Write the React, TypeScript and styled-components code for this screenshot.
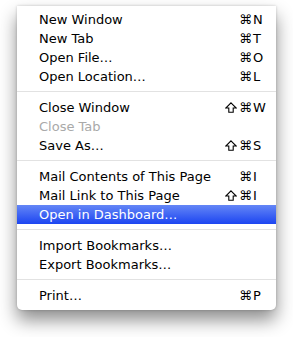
import styled, { createGlobalStyle } from "styled-components";

type Item = {
  label: string;
  shift?: boolean;
  keyName?: string;
  disabled?: boolean;
  active?: boolean;
};

const groups: Item[][] = [
  [
    { label: "New Window", keyName: "N" },
    { label: "New Tab", keyName: "T" },
    { label: "Open File…", keyName: "O" },
    { label: "Open Location…", keyName: "L" },
  ],
  [
    { label: "Close Window", shift: true, keyName: "W" },
    { label: "Close Tab", disabled: true },
    { label: "Save As…", shift: true, keyName: "S" },
  ],
  [
    { label: "Mail Contents of This Page", keyName: "I" },
    { label: "Mail Link to This Page", shift: true, keyName: "I" },
    { label: "Open in Dashboard…", active: true },
  ],
  [{ label: "Import Bookmarks…" }, { label: "Export Bookmarks…" }],
  [{ label: "Print…", keyName: "P" }],
];

const ShiftIcon = () => (
  <ShiftSvg width="12" height="11" viewBox="0 0 12 11">
    <path
      d="M6 0.8 L11.2 6 H8.2 V10.2 H3.8 V6 H0.8 Z"
      fill="none"
      stroke="currentColor"
      strokeWidth="1.1"
      strokeLinejoin="miter"
    />
  </ShiftSvg>
);

const App = () => {
  return (
    <>
      <GlobalStyle />
      <Page>
        <Menu>
          {groups.map((group, gi) => (
            <div key={gi}>
              {gi > 0 && <Separator />}
              {group.map((item) => (
                <Row
                  key={item.label}
                  $disabled={item.disabled}
                  $active={item.active}
                >
                  <Label>{item.label}</Label>
                  {item.keyName && (
                    <Shortcut>
                      {item.shift && <ShiftIcon />}
                      <Mods>⌘</Mods>
                      <Key>{item.keyName}</Key>
                    </Shortcut>
                  )}
                </Row>
              ))}
            </div>
          ))}
        </Menu>
      </Page>
    </>
  );
};

export default App;

const GlobalStyle = createGlobalStyle`
  html, body {
    margin: 0;
    padding: 0;
    background: #fff;
  }
  body {
    font-family: "DejaVu Sans", "Liberation Sans", sans-serif;
  }
`;

const Page = styled.div`
  width: 293px;
  height: 337px;
  padding: 6px 17px 0;
  box-sizing: border-box;
  overflow: hidden;
`;

const Menu = styled.div`
  width: 259px;
  padding: 4px 0 5px;
  background: #fff;
  border-radius: 0 0 5px 5px;
  box-shadow: 0 10px 18px rgba(0, 0, 0, 0.45), 0 0 3px rgba(0, 0, 0, 0.2);
`;

const Row = styled.div<{ $disabled?: boolean; $active?: boolean }>`
  display: flex;
  align-items: center;
  justify-content: space-between;
  height: 19px;
  line-height: 19px;
  padding: 0 12px 0 22px;
  font-size: 13px;
  color: ${(p) => (p.$disabled ? "#a9a9a9" : p.$active ? "#fff" : "#000")};
  background: ${(p) =>
    p.$active ? "linear-gradient(#6486f6, #1c45f1)" : "transparent"};
`;

const Label = styled.span`
  white-space: nowrap;
`;

const Shortcut = styled.span`
  display: flex;
  align-items: center;
  white-space: nowrap;
`;

const ShiftSvg = styled.svg`
  display: block;
  margin-right: 2px;
  margin-top: -1px;
`;

const Mods = styled.span`
  text-align: right;
`;

const Key = styled.span`
  width: 11px;
  padding-left: 1px;
  text-align: left;
`;

const Separator = styled.div`
  height: 1px;
  margin: 5px 0 6px;
  background: #e2e2e2;
`;
